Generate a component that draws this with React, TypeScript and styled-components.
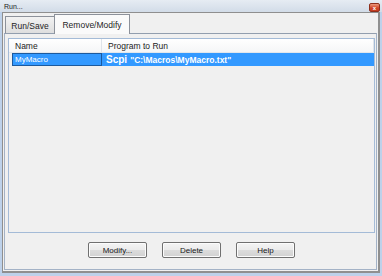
import React from 'react';
import styled, { createGlobalStyle } from 'styled-components';

const GlobalStyle = createGlobalStyle`
	html, body {
		margin: 0;
		padding: 0;
		background: #f0f0f0;
	}
	* {
		box-sizing: border-box;
	}
`;

const Frame = styled.div`
	width: 382px;
	height: 276px;
	display: flex;
	flex-direction: column;
	background: #bdd1ea;
	font-family: 'Liberation Sans', Arial, sans-serif;
	color: #1e1e1e;
	overflow: hidden;
`;
const TitleBar = styled.div`
	height: 12px;
	display: flex;
	align-items: center;
	justify-content: space-between;
	padding: 0 2px 0 4px;
	background: linear-gradient(#e6ecf3, #d2dce8);
`;
const Title = styled.span`
	font-size: 7px;
	line-height: 7px;
	color: #1a1a1a;
`;
const CloseButton = styled.div`
	width: 11px;
	height: 9px;
	margin-top: 3px;
	border: 1px solid #8e2f1c;
	border-radius: 2px;
	background: linear-gradient(#ec9a7f, #d1472a 55%, #c43b20);
	display: flex;
	align-items: center;
	justify-content: center;
	color: #fff;
	font-size: 6px;
	line-height: 6px;
	font-weight: bold;
`;
const FrameBody = styled.div`
	flex: 1;
	display: flex;
	padding: 0 2px 3px 2px;
`;
const Client = styled.div`
	flex: 1;
	display: flex;
	flex-direction: column;
	background: #f0f0f0;
	border: 1px solid #8f8f8f;
	border-right-width: 2px;
	border-bottom-width: 2px;
`;
const TabRow = styled.div`
	height: 20px;
	display: flex;
	align-items: flex-end;
	padding-left: 2px;
`;
const Tab = styled.div<{ $active?: boolean }>`
	position: relative;
	width: ${(p) => (p.$active ? '76px' : '50px')};
	height: ${(p) => (p.$active ? '20px' : '17px')};
	margin-left: ${(p) => (p.$active ? '-1px' : '0')};
	margin-bottom: ${(p) => (p.$active ? '-1px' : '0')};
	z-index: ${(p) => (p.$active ? 1 : 0)};
	border: 1px solid #8c919a;
	border-bottom: none;
	background: ${(p) => (p.$active ? '#fafafa' : 'linear-gradient(#f2f2f2, #dedede)')};
	display: flex;
	align-items: center;
	justify-content: center;
	padding-top: ${(p) => (p.$active ? '0' : '1px')};
	font-size: 8.5px;
`;
const Panel = styled.div`
	flex: 1;
	display: flex;
	flex-direction: column;
	margin: 0 1px 1px 1px;
	border: 1px solid #a3b2c6;
	border-top-color: #929eae;
	padding: 4px 1px 0 3px;
`;
const ListBox = styled.div`
	flex: 1;
	border: 1px solid #a4bbd7;
	background: #f0f0f0;
	display: flex;
	flex-direction: column;
`;
const HeaderRow = styled.div`
	height: 14px;
	display: flex;
	background: linear-gradient(#ffffff, #f5f6f7);
	border-bottom: 1px solid #e3e7ec;
`;
const HeaderCell = styled.div<{ $width?: number }>`
	${(p) => (p.$width ? `width: ${p.$width}px;` : 'flex: 1;')}
	display: flex;
	align-items: center;
	padding-left: 6px;
	font-size: 8.5px;
	border-right: 1px solid #dfe4ea;
	color: #222;
`;
const Row = styled.div`
	height: 13px;
	margin-left: 3px;
	display: flex;
	background: #3399ff;
	color: #fff;
`;
const NameCell = styled.div`
	width: 90px;
	display: flex;
	align-items: center;
	padding-left: 2px;
	border: 1px solid #1c5a9e;
	font-size: 8px;
`;
const ProgramCell = styled.div`
	flex: 1;
	display: flex;
	align-items: center;
	padding-left: 4px;
	font-weight: bold;
	white-space: pre;
`;
const Command = styled.span`
	font-size: 10px;
`;
const Path = styled.span`
	font-size: 8.5px;
	margin-left: 3px;
`;
const ButtonRow = styled.div`
	display: flex;
	justify-content: center;
	gap: 15px;
	padding: 9px 0 11px;
`;
const Button = styled.div`
	width: 59px;
	height: 16px;
	border: 1px solid #707070;
	border-radius: 2px;
	background: linear-gradient(#f4f4f4, #ebebeb 50%, #dcdcdc 51%, #d2d2d2);
	box-shadow: inset 0 0 0 1px #fcfcfc;
	display: flex;
	align-items: center;
	justify-content: center;
	font-size: 8px;
	color: #1a1a1a;
`;

const App = () => {
	return (
		<>
			<GlobalStyle />
			<Frame>
				<TitleBar>
					<Title>Run...</Title>
					<CloseButton>x</CloseButton>
				</TitleBar>
				<FrameBody>
					<Client>
						<TabRow>
							<Tab>Run/Save</Tab>
							<Tab $active>Remove/Modify</Tab>
						</TabRow>
						<Panel>
							<ListBox>
								<HeaderRow>
									<HeaderCell $width={93}>Name</HeaderCell>
									<HeaderCell>Program to Run</HeaderCell>
								</HeaderRow>
								<Row>
									<NameCell>MyMacro</NameCell>
									<ProgramCell>
										<Command>Scpi</Command>
										<Path>"C:\Macros\MyMacro.txt"</Path>
									</ProgramCell>
								</Row>
							</ListBox>
							<ButtonRow>
								<Button>Modify...</Button>
								<Button>Delete</Button>
								<Button>Help</Button>
							</ButtonRow>
						</Panel>
					</Client>
				</FrameBody>
			</Frame>
		</>
	);
};
export default App;
